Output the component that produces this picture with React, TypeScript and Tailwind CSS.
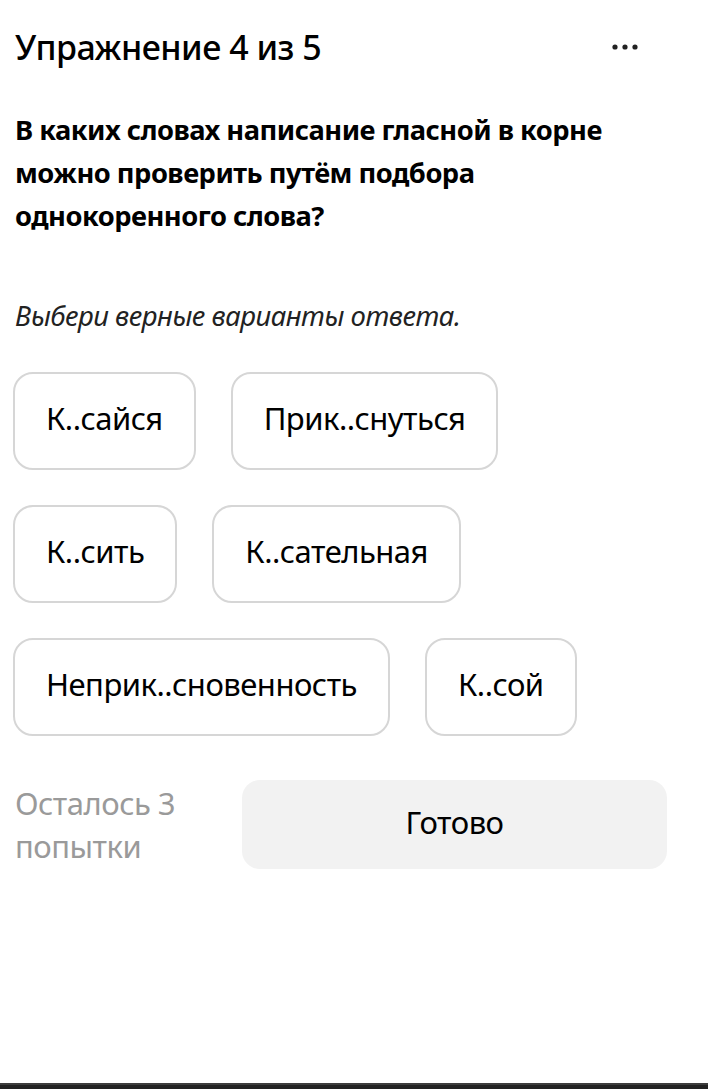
import React from "react";

const options = [
  ["К..сайся", "Прик..снуться"],
  ["К..сить", "К..сательная"],
  ["Неприк..сновенность", "К..сой"],
];

export default function App() {
  return (
    <div
      className="w-[708px] h-[1089px] bg-white flex flex-col text-black"
      style={{ fontFamily: '"Noto Sans", "Open Sans", sans-serif' }}
    >
      <div className="flex-1 flex flex-col px-[15px]">
        <div className="flex items-center justify-between pt-[26px]">
          <h1 className="text-[34px] leading-[42px] font-medium tracking-[-0.5px]">Упражнение 4 из 5</h1>
          <svg width="28" height="8" viewBox="0 0 28 8" className="mr-[54px]">
            <circle cx="4" cy="4" r="2.6" fill="#222" />
            <circle cx="14" cy="4" r="2.6" fill="#222" />
            <circle cx="24" cy="4" r="2.6" fill="#222" />
          </svg>
        </div>
        <p className="mt-[40px] text-[27.3px] leading-[43px] font-bold tracking-[-0.5px] w-[620px]">
          В каких словах написание гласной в корне можно проверить путём подбора однокоренного слова?
        </p>
        <p className="mt-[59px] text-[27.5px] leading-[40px] italic tracking-[-0.5px] text-[#222]">
          Выбери верные варианты ответа.
        </p>
        <div className="mt-[36px] flex flex-col gap-[35px] -ml-[2px]">
          {options.map((row, i) => (
            <div key={i} className="flex gap-[35px]">
              {row.map((o) => (
                <button
                  key={o}
                  className="h-[98px] px-[31px] pb-[6px] rounded-[20px] border-2 border-[#d6d6d6] bg-white text-[31px] tracking-[-0.5px] flex items-center"
                >
                  {o}
                </button>
              ))}
            </div>
          ))}
        </div>
        <div className="mt-[44px] flex items-center">
          <p className="w-[227px] text-[31px] leading-[43px] text-[#9a9a9a] tracking-[-0.5px]">
            Осталось 3<br />попытки
          </p>
          <button className="w-[425px] h-[89px] pb-[4px] rounded-[18px] bg-[#f2f2f2] text-[31px] tracking-[-0.5px] flex items-center justify-center">
            Готово
          </button>
        </div>
      </div>
      <div className="h-[2px] bg-[#3d3d3d]" />
      <div className="h-[4px] bg-[#222222]" />
    </div>
  );
}
